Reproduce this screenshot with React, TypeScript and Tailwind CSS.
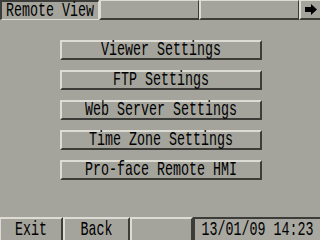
import React from "react";

const font = { fontFamily: '"Liberation Mono", monospace' };

function T({ children }: { children: React.ReactNode }) {
  return (
    <span
      className="inline-block whitespace-pre text-[13.33px] leading-[14px] text-black scale-y-[1.5] origin-center"
      style={font}
    >
      {children}
    </span>
  );
}

function MenuButton({ label }: { label: string }) {
  return (
    <div className="w-[202px] h-[20px] flex items-center justify-center border-t-2 border-l-2 border-b-2 border-r-2 border-t-[#dcdcd4] border-l-[#dcdcd4] border-b-[#3c3c38] border-r-[#3c3c38] bg-[#a4a49c]">
      <T>{label}</T>
    </div>
  );
}

export default function App() {
  return (
    <div className="w-[320px] h-[240px] bg-[#a4a49c] flex flex-col overflow-hidden">
      {/* top bar */}
      <div className="h-[20px] flex">
        <div className="w-[99px] h-[20px] flex items-center justify-center border-t-2 border-l-2 border-b border-r border-t-[#3c3c38] border-l-[#3c3c38] border-b-[#dcdcd4] border-r-[#dcdcd4] bg-[#a4a49c]">
          <T>Remote View</T>
        </div>
        <div className="w-[100px] h-[20px] border-t border-l-2 border-b-2 border-r border-t-[#dcdcd4] border-l-[#dcdcd4] border-b-[#3c3c38] border-r-[#3c3c38]" />
        <div className="w-[100px] h-[20px] border-t border-l-2 border-b-2 border-r border-t-[#dcdcd4] border-l-[#dcdcd4] border-b-[#3c3c38] border-r-[#3c3c38]" />
        <div className="flex-1 h-[20px] flex items-center justify-center border-t border-l-2 border-b-2 border-t-[#dcdcd4] border-l-[#dcdcd4] border-b-[#3c3c38]">
          <svg width="12" height="11" viewBox="0 0 12 11">
            <path d="M0 3h6V0l6 5.5L6 11V8H0z" fill="#000" />
          </svg>
        </div>
      </div>

      {/* menu */}
      <div className="flex-1 flex flex-col gap-[10px] pt-[20px] pl-[60px]">
        <MenuButton label="Viewer Settings" />
        <MenuButton label="FTP Settings" />
        <MenuButton label="Web Server Settings" />
        <MenuButton label="Time Zone Settings" />
        <MenuButton label="Pro-face Remote HMI" />
      </div>

      {/* bottom bar */}
      <div className="h-[23px] flex">
        <div className="w-[63px] flex items-center justify-center border-t-2 border-l border-r-2 border-t-[#dcdcd4] border-l-[#dcdcd4] border-r-[#3c3c38]">
          <T>Exit</T>
        </div>
        <div className="w-[67px] flex items-center justify-center border-t-2 border-l-2 border-r-2 border-t-[#dcdcd4] border-l-[#dcdcd4] border-r-[#3c3c38]">
          <T>Back</T>
        </div>
        <div className="w-[63px] border-t-2 border-l-2 border-r-2 border-t-[#dcdcd4] border-l-[#dcdcd4] border-r-[#3c3c38]" />
        <div className="flex-1 flex items-center justify-center border-t-2 border-l-2 border-t-[#3c3c38] border-l-[#3c3c38] bg-[#a8a8a0]">
          <T>13/01/09 14:23</T>
        </div>
      </div>
    </div>
  );
}
